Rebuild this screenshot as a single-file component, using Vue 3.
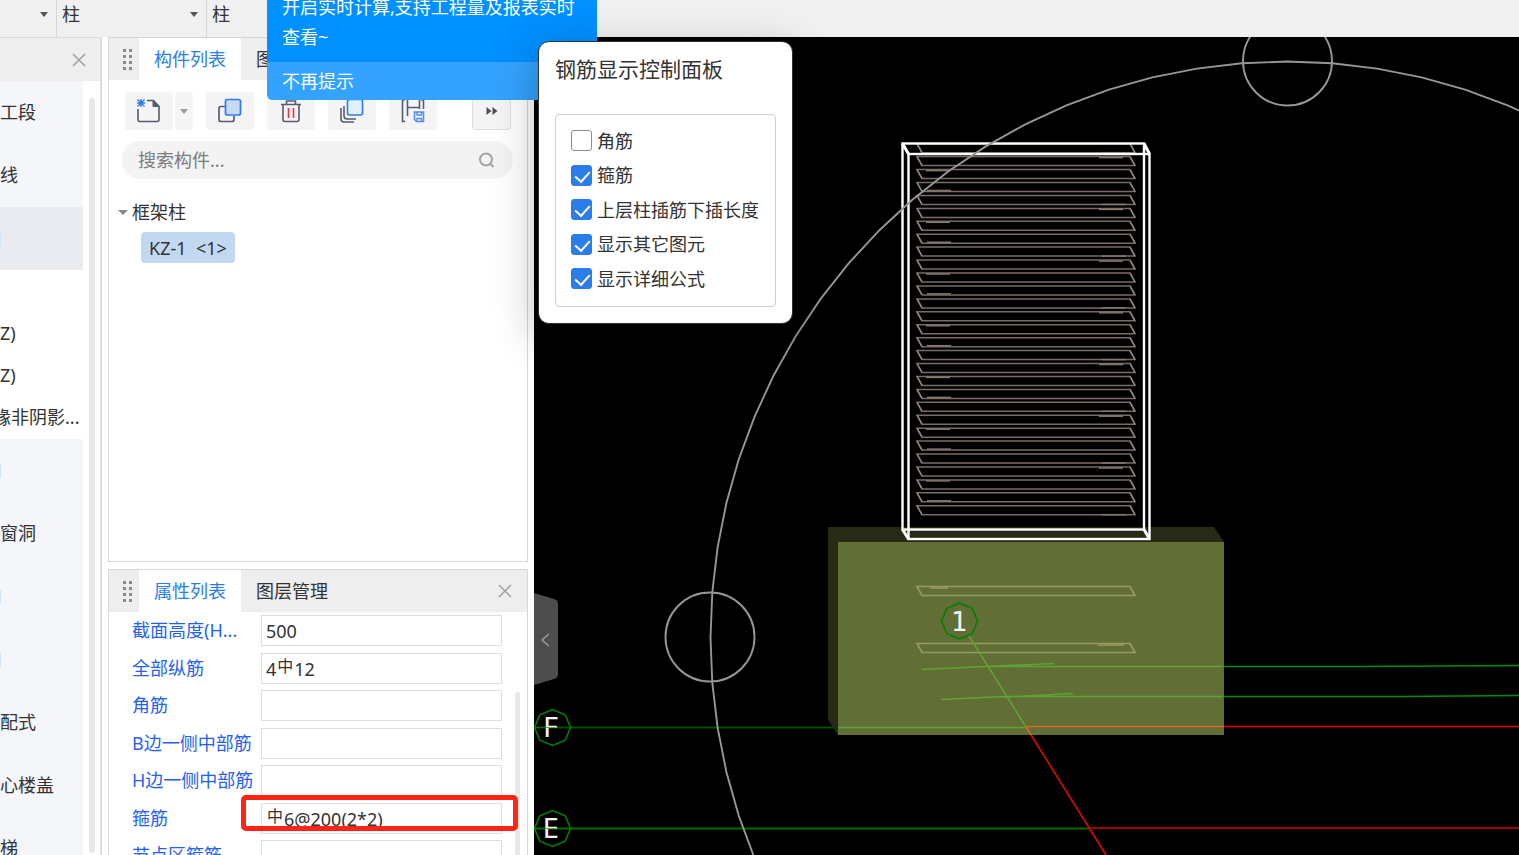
<script setup>
import { ref } from 'vue'

const families = ['柱', '柱']

const navTop = [{ name: '工段' }, { name: '线' }, { name: '', active: true }]
const navSub = [
  { name: '' },
  { name: 'Z)' },
  { name: 'Z)' },
  { name: '缘非阴影...', cut: true }
]
const navBottom = ['', '窗洞', '', '', '配式', '心楼盖', '梯']

const keyword = ref('')

const attrs = ref([
  { id: 'height', label: '截面高度(H...', before: '', grade: false, value: '500' },
  { id: 'all', label: '全部纵筋', before: '4', grade: true, value: '12' },
  { id: 'corner', label: '角筋', before: '', grade: false, value: '' },
  { id: 'bside', label: 'B边一侧中部筋', before: '', grade: false, value: '' },
  { id: 'hside', label: 'H边一侧中部筋', before: '', grade: false, value: '' },
  { id: 'stirrup', label: '箍筋', before: '', grade: true, value: '6@200(2*2)', marked: true },
  { id: 'node', label: '节点区箍筋', before: '', grade: false, value: '' }
])

const options = ref([
  { id: 'o1', label: '角筋', on: false },
  { id: 'o2', label: '箍筋', on: true },
  { id: 'o3', label: '上层柱插筋下插长度', on: true },
  { id: 'o4', label: '显示其它图元', on: true },
  { id: 'o5', label: '显示详细公式', on: true }
])

const loopPath = (y) => `M917 ${y}H1130L1135 ${y + 9}H922Z`
const tips = [
  [1102, 9],
  [1099, 1],
  [926, 1],
  [927, 8]
]
const loops = Array.from({ length: 29 }, (_, i) => {
  const y = Math.round((143.7 + i * 12.93) * 10) / 10
  const [x, dy] = tips[i % 4]
  return { d: loopPath(y), ends: `M917 ${y}l5 9M1130 ${y}l5 9`, tip: `M${x} ${y + dy}h24` }
})

const orbit = Array.from({ length: 80 }, (_, i) => {
  const a = (i * Math.PI) / 40
  return `${(1287 + 576.5 * Math.cos(a)).toFixed(1)},${(637.5 + 576 * Math.sin(a)).toFixed(1)}`
}).join(' ')

const octagon = (cx, cy) =>
  Array.from({ length: 8 }, (_, i) => {
    const a = (i * Math.PI) / 4
    return `${(cx + 18 * Math.cos(a)).toFixed(1)},${(cy + 18 * Math.sin(a)).toFixed(1)}`
  }).join(' ')
</script>

<template>
  <div class="app">
    <header class="topbar">
      <div class="cell first"><i class="caret"></i></div>
      <div v-for="(f, i) in families" :key="i" class="cell">
        <span>{{ f }}</span>
        <i v-if="i === 0" class="caret"></i>
      </div>
    </header>

    <main class="body">
      <nav class="nav">
        <div class="nav-head">
          <button class="close" aria-label="关闭">
            <svg width="14" height="14" viewBox="0 0 14 14"><path d="M1 1L13 13M13 1L1 13" /></svg>
          </button>
        </div>
        <div class="nav-body">
          <div class="nav-list">
            <div v-for="(n, i) in navTop" :key="'t' + i" class="nav-item" :class="{ active: n.active }">{{ n.name }}</div>
            <div class="nav-subs">
              <div v-for="(n, i) in navSub" :key="'s' + i" class="nav-sub" :class="{ cut: n.cut }">{{ n.name }}</div>
            </div>
            <div v-for="(n, i) in navBottom" :key="'b' + i" class="nav-item" :class="{ sliver: !n }">{{ n }}</div>
          </div>
          <div class="nav-track"></div>
        </div>
      </nav>

      <section class="middle">
        <div class="card upper">
          <div class="tabs">
            <span class="grip"><i v-for="k in 8" :key="k"></i></span>
            <button class="tab on">构件列表</button>
            <button class="tab">图</button>
          </div>
          <div class="tools">
            <div class="split">
              <button class="tool" aria-label="新建">
                <svg width="26" height="26" viewBox="0 0 26 26" fill="none">
                  <path d="M2 11V21.500q0 2 2 2H21q2 0 2-2V8.500L17.500 2.500H11" stroke="#565c6b" stroke-width="1.600" />
                  <path d="M17 2.500V8.500H23Z" fill="#565c6b" stroke="#565c6b" />
                  <path d="M5 1V9M1 5H9M1.500 1.500L8.500 8.500M8.500 1.500L1.500 8.500" stroke="#2b7de9" stroke-width="1.400" />
                </svg>
              </button>
              <button class="tool drop" aria-label="新建选项"><i class="caret grey"></i></button>
            </div>
            <button class="tool" aria-label="复制">
              <svg width="26" height="26" viewBox="0 0 26 26" fill="none" stroke-width="1.700">
                <path d="M8 8.500H4q-2 0-2 2V21.500q0 2 2 2H15q2 0 2-2V18" stroke="#565c6b" />
                <rect x="8.500" y="1.500" width="15" height="15.500" rx="2" fill="#c9daf3" stroke="#2b7de9" />
              </svg>
            </button>
            <button class="tool" aria-label="删除">
              <svg width="26" height="26" viewBox="0 0 26 26" fill="none" stroke-width="1.600">
                <path d="M3 6.500H23M8.500 6V3H17.500V6M5 7V21.500q0 2 2 2H19q2 0 2-2V7" stroke="#565c6b" />
                <path d="M10.500 10V20M15.500 10V20" stroke="#e0383e" stroke-width="1.600" />
              </svg>
            </button>
            <button class="tool" aria-label="层间复制">
              <svg width="26" height="26" viewBox="0 0 26 26" fill="none" stroke-width="1.600">
                <path d="M2 10V21q0 3 3 3H15M5 8V18q0 3 3 3H17" stroke="#565c6b" />
                <rect x="8.500" y="1.500" width="15" height="15.500" rx="2" fill="#e4effd" stroke="#2b7de9" />
              </svg>
            </button>
            <button class="tool" aria-label="存档">
              <svg width="26" height="26" viewBox="0 0 26 26" fill="none" stroke-width="1.600">
                <path d="M5 2H2.500V23.500H5M21 2H23.500V11M7.500 2V18M19.500 2V11M7.500 9.500H19.500" stroke="#565c6b" />
                <path d="M14.500 14H23.500V23.500H16.500L14.500 21.500Z" stroke="#4c8fec" />
                <path d="M17 14V17H21.500V14M17 23V20.500H21.500V23" stroke="#4c8fec" stroke-width="1.300" />
              </svg>
            </button>
            <button class="tool more" aria-label="更多">
              <svg width="12" height="8" viewBox="0 0 12 8"><path d="M0.500 0L5.500 4L0.500 8ZM6.500 0L11.500 4L6.500 8Z" fill="#4a4f5a" /></svg>
            </button>
          </div>
          <div class="search">
            <input v-model="keyword" type="text" placeholder="搜索构件..." aria-label="搜索构件" />
            <svg width="18" height="18" viewBox="0 0 18 18" fill="none" stroke="#a3a3a3" stroke-width="2">
              <circle cx="8" cy="8.500" r="6" /><path d="M12.500 13L15.500 16" />
            </svg>
          </div>
          <div class="tree">
            <div class="branch"><i class="caret big"></i><span>框架柱</span></div>
            <button class="leaf">KZ-1&nbsp; &lt;1&gt;</button>
          </div>
        </div>

        <div class="card lower">
          <div class="tabs">
            <span class="grip"><i v-for="k in 8" :key="k"></i></span>
            <button class="tab on">属性列表</button>
            <button class="tab">图层管理</button>
            <button class="close" aria-label="关闭属性">
              <svg width="14" height="14" viewBox="0 0 14 14"><path d="M1 1L13 13M13 1L1 13" /></svg>
            </button>
          </div>
          <div class="attrs">
            <div v-for="a in attrs" :key="a.id" class="attr">
              <label :for="a.id">{{ a.label }}</label>
              <div class="field">
                <span v-if="a.before">{{ a.before }}</span>
                <span v-if="a.grade" class="grade">中</span>
                <input :id="a.id" v-model="a.value" type="text" />
              </div>
              <div v-if="a.marked" class="mark"></div>
            </div>
            <div class="attr-track"></div>
          </div>
        </div>
      </section>

      <section class="view">
        <svg class="scene" viewBox="534 37 985 818" preserveAspectRatio="xMinYMin slice" fill="none">
          <g stroke="#008000">
            <path d="M534 727.500H1026" stroke="#005000" stroke-width="2" />
            <path d="M534 828.500H1089" stroke="#006c00" stroke-width="2" />
            <path d="M1223 666.500H1360L1519 665.500M1223 696.500H1400L1519 695.500" stroke="#009000" stroke-width="1.500" />
          </g>
          <path d="M828 527H1214L1224 542V735H838L828 720Z" fill="#262a16" />
          <rect x="838" y="542" width="386" height="193" fill="#616f36" />
          <g stroke="#989a62" stroke-width="1.700">
            <path :d="loopPath(586.5)" /><path :d="loopPath(643.5)" />
            <path d="M930 588H948M1098 645H1124" />
          </g>
          <g stroke="#5fa432" stroke-width="1.500">
            <path d="M922 669.500L985 666.500H1223M985 666.500L1054 663.500" />
            <path d="M941 699.500L1005 696.500H1223M1005 697L1073 693.500" />
            <path d="M838 727.500H1026M969 636L1026 727" />
          </g>
          <path d="M1026 726.500H1224" stroke="#dc6530" stroke-width="1.500" />
          <path d="M1224 726.500H1519M1031 735L1106 855" stroke="#f00000" stroke-width="1.500" />
          <path d="M1026 727L1031 735" stroke="#dc6530" stroke-width="1.500" />
          <path d="M1089 828H1519" stroke="#9c0000" stroke-width="2" />

          <g stroke-width="1.500">
            <path v-for="(l, i) in loops" :key="'l' + i" :d="l.d" stroke="#786c67" />
            <path v-for="(l, i) in loops" :key="'e' + i" :d="l.ends" stroke="#92847d" />
            <path v-for="(l, i) in loops" :key="'t' + i" :d="l.tip" stroke="#857871" />
          </g>
          <g stroke="#fff" stroke-width="2.400">
            <rect x="902.500" y="143.500" width="241.500" height="386" />
            <rect x="908.500" y="154" width="241" height="385" />
            <path d="M902.500 143.500L908.500 154M1144 143.500L1149.500 154M902.500 529.500L908.500 539M1144 529.500L1149.500 539" stroke-width="3" />
          </g>

          <g stroke="#969696" stroke-width="1.900">
            <polygon :points="orbit" />
            <circle cx="1287.500" cy="61" r="44.500" />
            <circle cx="710" cy="637" r="44.500" />
          </g>

          <g stroke="#008000" stroke-width="1.600">
            <polygon :points="octagon(959.5, 621)" />
            <polygon :points="octagon(552.5, 727.5)" />
            <polygon :points="octagon(552.5, 828.5)" />
          </g>
          <g class="axis" fill="#f2f2f2" text-anchor="middle">
            <text x="959" y="631">1</text>
            <text x="551" y="737">F</text>
            <text x="551" y="838">E</text>
          </g>
          <path d="M534 727.500H556M534 828.500H556" stroke="#008000" stroke-opacity="0.600" />
        </svg>
        <button class="fold" aria-label="收起">
          <svg width="24" height="94" viewBox="0 0 24 94" fill="none">
            <path d="M0 1L20 7Q24 8 24 12V82Q24 86 20 87L0 93Z" fill="#4d4d4d" />
            <path d="M15 42L8 48L15 54" stroke="#9a9a9a" stroke-width="1.500" />
          </svg>
        </button>
      </section>
    </main>

    <aside class="tip">
      <p>开启实时计算,支持工程量及报表实时<br />查看~</p>
      <button>不再提示</button>
    </aside>

    <section class="dialog" role="dialog" aria-labelledby="dlg-title">
      <h2 id="dlg-title">钢筋显示控制面板</h2>
      <div class="options">
        <div v-for="o in options" :key="o.id" class="option">
          <input :id="o.id" v-model="o.on" type="checkbox" />
          <label :for="o.id">{{ o.label }}</label>
        </div>
      </div>
    </section>
  </div>
</template>

<style>
body {
  margin: 0;
  overflow: hidden;
}
</style>

<style scoped>
.app,
.app * {
  box-sizing: border-box;
}
.app {
  position: relative;
  display: flex;
  flex-direction: column;
  height: 100vh;
  overflow: hidden;
  background: #fff;
  color: #333;
  font: 18px/28px "Noto Sans", "Noto Sans CJK SC", sans-serif;
}
button,
input {
  margin: 0;
  padding: 0;
  border: 0;
  background: none;
  color: inherit;
  font: inherit;
}
.caret {
  border: 4px solid transparent;
  border-top: 5px solid #50545c;
  border-bottom: 0;
}
.caret.grey {
  border-top-color: #999;
}
.caret.big {
  border-width: 5px 5px 0;
  border-top-color: #8a8a8a;
}

.topbar {
  display: flex;
  flex: none;
  height: 37px;
  background: #f0f0f0;
}
.cell {
  display: flex;
  justify-content: space-between;
  align-items: center;
  width: 150px;
  padding: 0 8px 9px 5px;
  border-left: 1px solid #d6d6d6;
}
.cell.first {
  justify-content: flex-end;
  width: 56px;
  border-left: 0;
}

.body {
  display: flex;
  flex: 1;
  min-height: 0;
}
.nav {
  display: flex;
  flex: none;
  flex-direction: column;
  width: 102px;
  border: solid #dcdcdc;
  border-width: 1px 2px 0 0;
}
.nav-head {
  display: flex;
  flex: none;
  justify-content: flex-end;
  align-items: center;
  height: 43px;
  padding-right: 14px;
  background: #eeeeef;
}
.close {
  display: flex;
}
.close svg {
  fill: none;
  stroke: #a0a0a0;
  stroke-width: 1.5;
}
.nav-body {
  display: flex;
  flex: 1;
  gap: 6px;
  min-height: 0;
}
.nav-list {
  width: 83px;
  overflow: hidden;
  white-space: nowrap;
}
.nav-item {
  height: 63px;
  line-height: 63px;
  background: #f4f6f9;
}
.nav-item.active {
  background: #e9ebf0;
}
.nav-item.active,
.nav-item.sliver {
  display: flex;
  align-items: center;
}
.nav-item.active::before,
.nav-item.sliver::before {
  content: "";
  width: 1px;
  height: 14px;
  background: #cfe7f8;
}
.nav-subs {
  padding-bottom: 1px;
}
.nav-sub {
  height: 42px;
  line-height: 42px;
}
.nav-sub.cut {
  margin-left: -7px;
}
.nav-track {
  width: 6px;
  margin: 17px 0 2px;
  border-radius: 3px;
  background: #e8e8e8;
}

.middle {
  display: flex;
  flex: none;
  flex-direction: column;
  gap: 7px;
  width: 432px;
  padding: 0 6px;
}
.card {
  border: 1px solid #d6d6d6;
}
.upper {
  flex: none;
  height: 525px;
}
.lower {
  display: flex;
  flex: 1;
  flex-direction: column;
  min-height: 0;
  overflow: hidden;
  border-bottom: 0;
}
.tabs {
  display: flex;
  align-items: stretch;
  flex: none;
  height: 42px;
  background: #eeeeef;
}
.grip {
  display: grid;
  grid-template-columns: 3px 3px;
  gap: 3px;
  place-content: center;
  width: 30px;
  padding-left: 6px;
}
.grip i {
  height: 3px;
  background: #8a8a8a;
}
.tab {
  padding: 0 15px;
}
.tab.on {
  background: #fff;
  color: #2b7de9;
}
.tabs .close {
  align-items: center;
  margin-left: auto;
  padding-right: 15px;
}

.tools {
  display: flex;
  gap: 13px;
  height: 38px;
  margin: 12px 16px 0;
}
.split {
  display: flex;
  gap: 2px;
}
.tool {
  display: flex;
  justify-content: center;
  align-items: center;
  width: 48px;
  border-radius: 4px;
  background: #f4f4f4;
}
.tool.drop {
  width: 18px;
}
.tool.more {
  width: 39px;
  margin-left: auto;
  border: solid #dedede;
  border-width: 0 1px 1px;
}
.search {
  display: flex;
  align-items: center;
  height: 38px;
  margin: 11px 14px 0 13px;
  padding: 0 17px 0 16px;
  border-radius: 19px;
  background: #f3f3f3;
}
.search input {
  flex: 1;
  min-width: 0;
  outline: 0;
}
.search input::placeholder {
  color: #7c7c7c;
  opacity: 1;
}
.tree {
  padding: 19px 9px;
}
.branch {
  display: flex;
  align-items: center;
  gap: 4px;
}
.leaf {
  height: 31px;
  min-width: 94px;
  margin: 6px 0 0 23px;
  padding: 0 6px;
  border-radius: 4px;
  background: #c2d8f1;
}

.attrs {
  position: relative;
  flex: 1;
  min-height: 0;
}
.attr {
  position: relative;
  display: grid;
  grid-template-columns: 129px minmax(0, 1fr);
  align-items: start;
  height: 38px;
  padding: 3px 25px 0 23px;
}
.attr:nth-child(even) {
  height: 37px;
}
.attr label {
  color: #1f62f5;
  line-height: 31px;
  white-space: nowrap;
}
.field {
  display: flex;
  align-items: center;
  height: 31px;
  padding: 0 4px;
  border: 1px solid #dedede;
}
.field input {
  flex: 1;
  min-width: 0;
  outline: 0;
}
.grade {
  padding: 0 1px 6px;
  font-size: 16px;
  line-height: 22px;
}
.mark {
  position: absolute;
  z-index: 1;
  top: -5px;
  right: 9px;
  left: 132px;
  height: 36px;
  border: 5px solid #ff2416;
  border-radius: 5px;
}
.attr-track {
  position: absolute;
  top: 80px;
  right: 7px;
  bottom: 0;
  width: 5px;
  border-radius: 3px 3px 0 0;
  background: #e8e8e8;
}

.view {
  position: relative;
  flex: 1;
  min-width: 0;
  overflow: hidden;
  background: #000;
}
.scene {
  position: absolute;
  inset: 0;
  width: 100%;
  height: 100%;
}
.axis {
  font: 27px "DejaVu Sans Mono", monospace;
}
.fold {
  position: absolute;
  top: 555px;
  left: 0;
  display: flex;
}

.tip {
  position: absolute;
  top: -8px;
  left: 267px;
  width: 330px;
  overflow: hidden;
  border-radius: 6px;
  background: #0090ff;
  color: #fff;
}
.tip p {
  margin: 0;
  padding: 0 15px 10px;
  line-height: 30px;
  white-space: nowrap;
}
.tip button {
  display: block;
  width: 100%;
  height: 38px;
  padding: 0 15px;
  background: #33a3ff;
  text-align: left;
}

.dialog {
  position: absolute;
  top: 41px;
  left: 538px;
  width: 255px;
  padding: 13px 16px 16px;
  border: 1px solid #303030;
  border-radius: 11px;
  background: #fff;
  box-shadow: 0 14px 44px rgba(0, 0, 0, 0.3);
}
.dialog h2 {
  margin: 0;
  font-size: 21px;
  font-weight: 400;
  line-height: 28px;
}
.options {
  margin-top: 31px;
  padding: 8px 15px 10px;
  border: 1px solid #cfcfcf;
  border-radius: 4px;
}
.option {
  display: flex;
  align-items: center;
  gap: 5px;
  height: 35px;
  white-space: nowrap;
}
.option:nth-child(even) {
  height: 34px;
}
.option input {
  position: relative;
  flex: none;
  width: 21px;
  height: 21px;
  border: 1px solid #8c8c8c;
  border-radius: 3px;
  appearance: none;
}
.option input:checked {
  border-color: #2b7de9;
  background: #2b7de9;
}
.option input:checked::after {
  content: "";
  position: absolute;
  top: 2px;
  left: 6px;
  width: 7px;
  height: 12px;
  border: solid #fff;
  border-width: 0 2px 2px 0;
  transform: rotate(42deg);
}
</style>
